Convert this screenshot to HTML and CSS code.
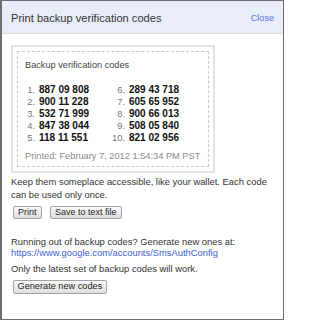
FILE: index.html
```html
<!DOCTYPE html>
<html>
<head>
<meta charset="utf-8">
<link rel="stylesheet" href="styles.css">
</head>
<body>
<div class="dialog">
  <div class="header">
    <span class="title">Print backup verification codes</span>
    <a class="close" href="#">Close</a>
  </div>
  <div class="content">
    <div class="codebox">
      <div class="dashed">
        <div class="codes-title">Backup verification codes</div>
        <div class="codes">
          <span class="num">1.</span><span class="code">887 09 808</span><span class="num">6.</span><span class="code">289 43 718</span>
          <span class="num">2.</span><span class="code">900 11 228</span><span class="num">7.</span><span class="code">605 65 952</span>
          <span class="num">3.</span><span class="code">532 71 999</span><span class="num">8.</span><span class="code">900 66 013</span>
          <span class="num">4.</span><span class="code">847 38 044</span><span class="num">9.</span><span class="code">508 05 840</span>
          <span class="num">5.</span><span class="code">118 11 551</span><span class="num">10.</span><span class="code">821 02 956</span>
        </div>
        <div class="printed">Printed: February 7, 2012 1:54:34 PM PST</div>
      </div>
    </div>
    <p class="keep">Keep them someplace accessible, like your wallet. Each code can be used only once.</p>
    <div class="buttons">
      <button class="btn">Print</button>
      <button class="btn">Save to text file</button>
    </div>
    <p class="running">Running out of backup codes? Generate new ones at:<br><a class="link" href="#">https://www.google.com/accounts/SmsAuthConfig</a></p>
    <p class="only">Only the latest set of backup codes will work.</p>
    <div class="buttons gen">
      <button class="btn">Generate new codes</button>
    </div>
  </div>
</div>
</body>
</html>
```

FILE: styles.css
```css
html, body {
  margin: 0;
  padding: 0;
  background: #fff;
}
body {
  font-family: Arial, "Liberation Sans", sans-serif;
  color: #333;
}
.dialog {
  width: 284px;
  height: 320px;
  box-sizing: border-box;
  border: 1px solid #6e6e6e;
  border-left-width: 2px;
  overflow: hidden;
}
.header {
  height: 32px;
  background: #e9edf9;
  border-bottom: 1px solid #dcdcdc;
  display: flex;
  align-items: center;
  justify-content: space-between;
  padding: 0 9px 0 9px;
}
.title {
  font-size: 11.1px;
  color: #333;
  line-height: 14px;
  padding-top: 1px;
}
.close {
  font-size: 9.1px;
  color: #5774d8;
  text-decoration: none;
  line-height: 12px;
  padding-top: 1px;
}
.content {
  padding: 11px 9px 0 9px;
  font-size: 9.4px;
}
.codebox {
  width: 204px;
  box-sizing: border-box;
  border: 2px solid #e4e4e4;
  padding: 4px;
}
.dashed {
  border: 1px dashed #c9c9c9;
  padding: 7px 6px 4px 7px;
}
.codes-title {
  font-size: 9.2px;
  line-height: 12px;
  color: #444;
}
.codes {
  margin: 13px 0 0 -4px;
  display: grid;
  grid-template-columns: 14px 76px 14px auto;
  line-height: 12px;
}
.num {
  text-align: right;
  color: #777;
  font-size: 9.4px;
}
.code {
  padding-left: 4px;
  font-weight: bold;
  font-size: 10px;
  color: #111;
}
.printed {
  margin-top: 6px;
  line-height: 12px;
  font-size: 9.25px;
  color: #8a8a8a;
}
p {
  margin: 0;
}
.keep {
  margin-top: 3px;
  line-height: 12.5px;
}
.buttons {
  display: flex;
  gap: 7.5px;
  margin: 5px 0 0 1.5px;
}
.btn {
  font-family: Arial, "Liberation Sans", sans-serif;
  font-size: 9px;
  color: #222;
  height: 13px;
  line-height: 11px;
  padding: 0 4.5px;
  border: 1px solid #a3a3a3;
  border-radius: 2px;
  background: linear-gradient(#fbfbfb, #dedede);
  margin: 0;
}
.running {
  margin-top: 17px;
  line-height: 11px;
}
.link {
  color: #3b5fd0;
  text-decoration: none;
}
.only {
  margin-top: 4.5px;
  line-height: 11px;
}
.gen {
  margin-top: 6px;
}
.gen .btn {
  height: 14px;
  padding: 0 4px;
  font-size: 9.2px;
}
```
